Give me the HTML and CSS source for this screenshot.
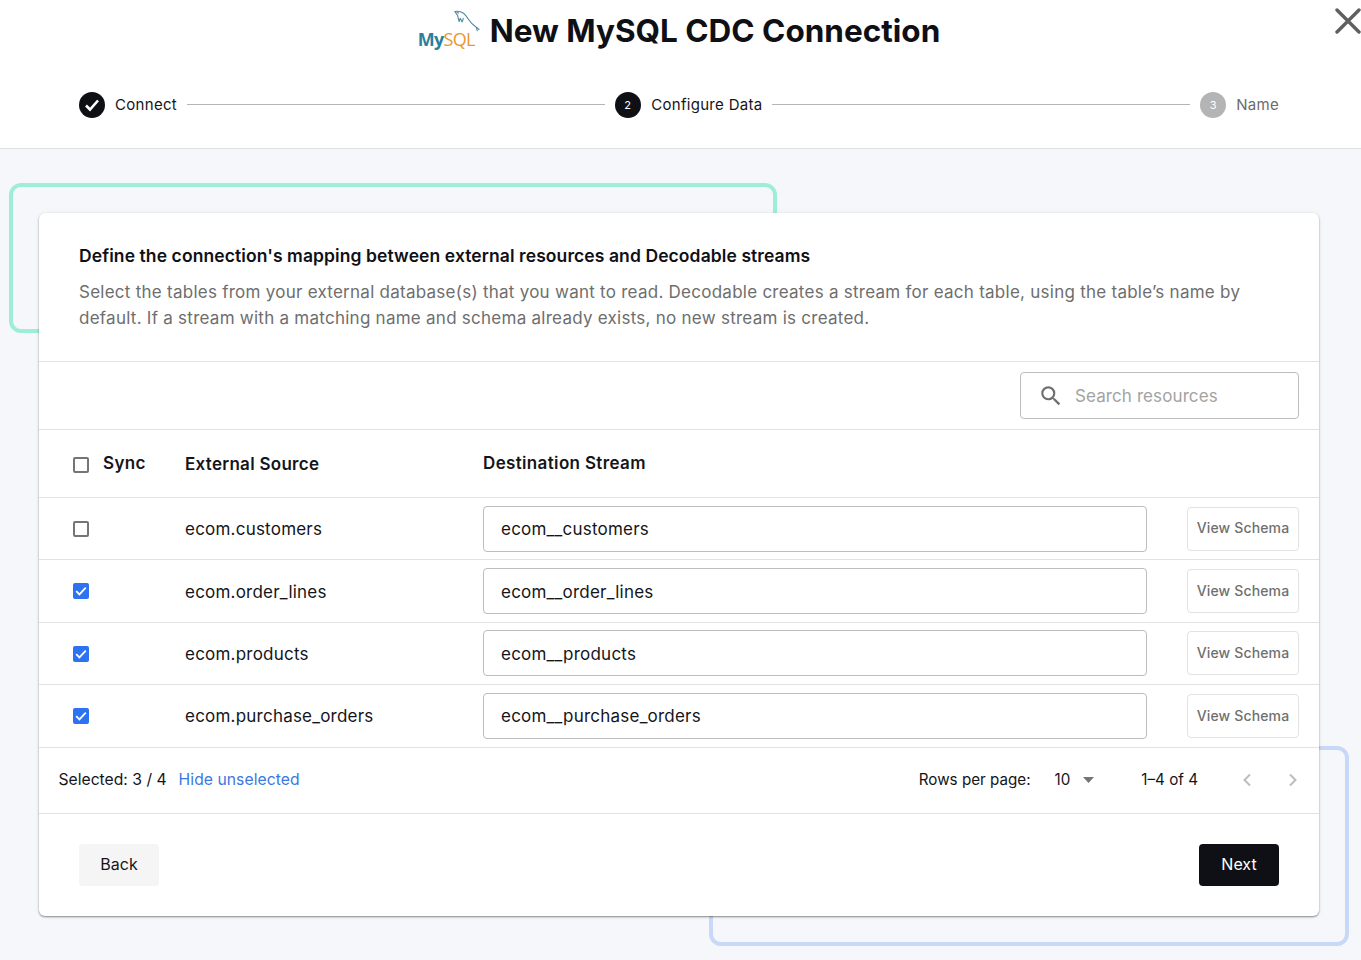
FILE: index.html
```html
<!DOCTYPE html>
<html lang="en">
<head>
<meta charset="utf-8">
<title>New MySQL CDC Connection</title>
<link rel="stylesheet" href="styles.css">
</head>
<body>
<header class="top">
  <div class="title-row">
    <div class="logo">
      <svg class="dolphin" width="26" height="26" viewBox="0 0 26 26" fill="none" stroke="#4f8aa0" stroke-width="1.1" stroke-linecap="round" stroke-linejoin="round">
        <path d="M1 1.5C4 .8 7 1.5 9.5 3.2 12 5 13.5 7.5 15 10c1.6 2.6 4 5 7.5 7.5 1 .8 1.8 1.3 2.5 2"/>
        <path d="M1 1.5c.8 1.6 1.6 2.8 2.6 3.8.4 2 .9 4 1.6 6.2l1-3.2c.7 1.2 1.4 2.4 1.8 3.7.8-1.1 1.2-2.4 1.2-3.8"/>
        <path d="M3 2.6l1.6.5"/>
        <path d="M22.5 17.5c.1 1.2.3 2.2.8 3.2"/>
      </svg>
      <span class="logo-text"><span class="my">My</span><span class="sql">SQL</span></span>
    </div>
    <h1>New MySQL CDC Connection</h1>
  </div>
  <button class="close" aria-label="Close">
    <svg width="26" height="26" viewBox="0 0 26 26" fill="none" stroke="#5f5f5f" stroke-width="3.4" stroke-linecap="round"><path d="M2 2l22 22M24 2L2 24"/></svg>
  </button>
  <nav class="stepper">
    <div class="step">
      <span class="dot done"><svg width="16" height="14" viewBox="0 0 16 14" fill="none" stroke="#fff" stroke-width="2.6"><path d="M2 7.5l4 4 8-9"/></svg></span>
      <span class="step-label">Connect</span>
    </div>
    <span class="line"></span>
    <div class="step step-mid">
      <span class="dot">2</span>
      <span class="step-label">Configure Data</span>
    </div>
    <span class="line"></span>
    <div class="step off">
      <span class="dot">3</span>
      <span class="step-label">Name</span>
    </div>
  </nav>
</header>

<main class="stage">
  <span class="deco deco-green"></span>
  <span class="deco deco-blue"></span>
  <section class="card">
    <div class="intro">
      <h2>Define the connection's mapping between external resources and Decodable streams</h2>
      <p>Select the tables from your external database(s) that you want to read. Decodable creates a stream for each table, using the table’s name by default. If a stream with a matching name and schema already exists, no new stream is created.</p>
    </div>
    <div class="toolbar">
      <label class="search">
        <svg width="26" height="26" viewBox="0 0 24 24" fill="#6f6f6f"><path d="M15.5 14h-.79l-.28-.27A6.47 6.47 0 0 0 16 9.5 6.5 6.5 0 1 0 9.5 16c1.61 0 3.09-.59 4.23-1.57l.27.28v.79l5 4.99L20.49 19l-4.99-5zm-6 0C7.01 14 5 11.99 5 9.5S7.01 5 9.5 5 14 7.01 14 9.5 11.99 14 9.5 14z"/></svg>
        <span>Search resources</span>
      </label>
    </div>
    <div class="row head">
      <span class="cell-check"><span class="box"></span></span>
      <span class="sync">Sync</span>
      <span class="src-head">External Source</span>
      <span>Destination Stream</span>
    </div>
    <div class="row short">
      <span class="cell-check"><span class="box"></span></span>
      <span class="sync"></span>
      <span>ecom.customers</span>
      <span class="field">ecom__customers</span>
      <button class="schema">View Schema</button>
    </div>
    <div class="row tall low-text">
      <span class="cell-check"><span class="box on"><svg width="16" height="16" viewBox="0 0 16 16" fill="none" stroke="#fff" stroke-width="1.8"><path d="M3.2 8.2l3.2 3.2 6.4-6.8"/></svg></span></span>
      <span class="sync"></span>
      <span class="src">ecom.order_lines</span>
      <span class="field">ecom__order_lines</span>
      <button class="schema">View Schema</button>
    </div>
    <div class="row short raised">
      <span class="cell-check"><span class="box on"><svg width="16" height="16" viewBox="0 0 16 16" fill="none" stroke="#fff" stroke-width="1.8"><path d="M3.2 8.2l3.2 3.2 6.4-6.8"/></svg></span></span>
      <span class="sync"></span>
      <span>ecom.products</span>
      <span class="field">ecom__products</span>
      <button class="schema">View Schema</button>
    </div>
    <div class="row tall">
      <span class="cell-check"><span class="box on"><svg width="16" height="16" viewBox="0 0 16 16" fill="none" stroke="#fff" stroke-width="1.8"><path d="M3.2 8.2l3.2 3.2 6.4-6.8"/></svg></span></span>
      <span class="sync"></span>
      <span>ecom.purchase_orders</span>
      <span class="field">ecom__purchase_orders</span>
      <button class="schema">View Schema</button>
    </div>
    <div class="pager">
      <span class="selected">Selected: 3 / 4</span>
      <a class="hide" href="#">Hide unselected</a>
      <span class="rows-label">Rows per page:</span>
      <span class="rows-value">10</span>
      <svg class="caret" width="11" height="6" viewBox="0 0 11 6" fill="#757575"><path d="M0 0h11L5.5 6z"/></svg>
      <span class="range">1–4 of 4</span>
      <svg class="chev first" width="10" height="14" viewBox="0 0 10 14" fill="none" stroke="#bdbdbd" stroke-width="2"><path d="M8 1.5L2.5 7 8 12.5"/></svg>
      <svg class="chev" width="10" height="14" viewBox="0 0 10 14" fill="none" stroke="#bdbdbd" stroke-width="2"><path d="M2 1.5L7.5 7 2 12.5"/></svg>
    </div>
    <div class="actions">
      <button class="btn back">Back</button>
      <button class="btn next">Next</button>
    </div>
  </section>
</main>
</body>
</html>
```
FILE: styles.css
```css
* { box-sizing: border-box; }
html, body { margin: 0; height: 960px; overflow: hidden; }
body {
  background: #f5f7fb;
  color: #14151a;
  font-family: Inter, "Liberation Sans", sans-serif;
}
button { font-family: inherit; cursor: pointer; }

.top {
  position: relative;
  height: 149px;
  background: #fff;
  border-bottom: 1px solid #e0e0e0;
}
.title-row {
  display: flex;
  justify-content: center;
  align-items: flex-start;
  gap: 11px;
  height: 80px;
  padding-top: 9px;
  padding-right: 3px;
}
h1 {
  margin: 0;
  font-size: 31.5px;
  line-height: 44px;
  font-weight: 700;
  color: #0f1016;
}
.logo { position: relative; width: 61px; height: 44px; }
.dolphin { position: absolute; left: 36px; top: 1px; }
.logo-text {
  position: absolute;
  left: 0;
  top: 19px;
  font-family: "Open Sans", sans-serif;
  font-size: 18px;
  line-height: 22px;
  font-weight: 700;
  letter-spacing: -0.7px;
}
.my { color: #2b7f9a; }
.sql { color: #e9972f; font-weight: 400; }

.close {
  position: absolute;
  top: 8px;
  right: 0;
  width: 26px;
  height: 26px;
  padding: 0;
  border: 0;
  background: none;
  line-height: 0;
}

.stepper {
  display: flex;
  align-items: center;
  margin: 0 82px 0 79px;
  height: 26px;
  position: absolute;
  top: 92px;
  left: 0;
  right: 0;
}
.step { display: flex; align-items: center; gap: 10px; font-size: 15px; letter-spacing: 0.3px; }
.step-mid { gap: 10.5px; }
.step-label { color: #14151a; margin-bottom: 2px; }
.dot {
  width: 26px;
  height: 26px;
  border-radius: 50%;
  background: #0f1016;
  color: #fff;
  font-size: 11px;
  letter-spacing: 0;
  display: flex;
  align-items: center;
  justify-content: center;
}
.off .dot { background: #b4b4b4; }
.off .step-label { color: #6b6b6b; }
.line { flex: 1; height: 1px; margin: 0 10px 2px; background: #b5b5b5; }

.stage { position: relative; height: 811px; padding: 64px 42px 0 39px; }
.deco { position: absolute; border: 4px solid; border-radius: 12px; }
.deco-green { left: 9px; top: 34px; width: 768px; height: 150px; border-color: #9eeed6; }
.deco-blue { left: 709px; top: 597px; width: 640px; height: 200px; border-color: #c7d8f8; }
.card {
  position: relative;
  height: 703px;
  background: #fff;
  border-radius: 6px;
  box-shadow: 0 1px 2px rgba(0,0,0,.45), 0 0 6px rgba(0,0,0,.04);
  display: flex;
  flex-direction: column;
}
.intro { height: 149px; padding: 31px 40px 0; border-bottom: 1px solid #e2e2e2; }
h2 { margin: 0 0 11px; font-size: 17.5px; line-height: 24px; font-weight: 600; letter-spacing: 0.09px; color: #0f1016; }
.intro p { margin: 0; font-size: 17px; line-height: 26px; color: #6e6e6e; letter-spacing: 0.255px; }

.toolbar {
  height: 68px;
  display: flex;
  justify-content: flex-end;
  align-items: center;
  padding-right: 20px;
  border-bottom: 1px solid #e2e2e2;
}
.search {
  width: 279px;
  height: 47px;
  border: 1px solid #bdbdbd;
  border-radius: 4px;
  display: flex;
  align-items: center;
  gap: 11px;
  padding-left: 17px;
  font-size: 17px;
  letter-spacing: 0.1px;
  color: #a3a3a3;
}

.row {
  display: grid;
  grid-template-columns: 30px 82px 298px 664px 152px;
  align-items: center;
  padding-left: 34px;
  font-size: 17px;
  letter-spacing: 0.22px;
  border-bottom: 1px solid #e2e2e2;
}
.short { height: 62px; }
.tall { height: 63px; }
.head { height: 68px; padding-bottom: 2px; font-weight: 600; letter-spacing: 0.35px; }
.head .cell-check { padding-top: 5px; }
.head .src-head { padding-top: 2px; letter-spacing: 0.28px; }
.low-text .src, .low-text .field, .raised .field { padding-top: 1px; }
.raised .field, .raised .schema { margin-bottom: 1px; }
.cell-check { display: flex; align-items: center; }
.box {
  width: 16px;
  height: 16px;
  border: 2px solid #757575;
  border-radius: 2px;
  display: block;
}
.box.on { background: #2d72f0; border: 0; line-height: 0; }
.field {
  height: 46px;
  border: 1px solid #bdbdbd;
  border-radius: 4px;
  padding-left: 17px;
  display: flex;
  align-items: center;
}
.schema {
  height: 44px;
  width: 112px;
  margin-left: 40px;
  padding: 0 0 2px;
  background: #fff;
  border: 1px solid #e2e2e2;
  border-radius: 4px;
  font-size: 14px;
  font-weight: 500;
  letter-spacing: 0.15px;
  color: #6f6f6f;
}

.pager {
  height: 66px;
  display: flex;
  align-items: center;
  padding: 0 21px 2px 19.5px;
  font-size: 15.2px;
  border-bottom: 1px solid #e2e2e2;
}
.selected { font-size: 15.7px; }
.hide { margin-left: 12px; font-size: 15.7px; color: #3b78e0; text-decoration: none; letter-spacing: 0.05px; }
.rows-label { margin-left: auto; }
.rows-value { margin-left: 24px; }
.caret { margin-left: 13px; }
.range { margin-left: 47px; }
.chev.first { margin-left: 44px; }
.chev { margin-left: 36px; }

.actions {
  flex: 1;
  display: flex;
  justify-content: space-between;
  align-items: flex-start;
  padding: 30px 40px 0;
}
.btn {
  width: 80px;
  height: 42px;
  padding: 0 0 2px;
  border: 0;
  border-radius: 4px;
  font-size: 16px;
}
.back { background: #f5f5f5; color: #14151a; }
.next { background: #0f1016; color: #fff; }
```
